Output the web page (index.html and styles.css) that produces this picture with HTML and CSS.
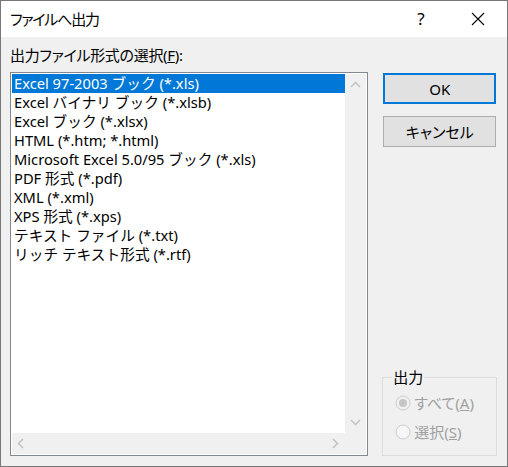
FILE: index.html
```html
<!DOCTYPE html>
<html lang="ja">
<head>
<meta charset="utf-8">
<link rel="stylesheet" href="styles.css">
</head>
<body>
<div class="window">
  <div class="titlebar">
    <span class="title">ファイルへ出力</span>
    <span class="help">?</span>
    <span class="close">
      <svg width="14" height="14" viewBox="0 0 14 14"><path d="M1 1 L13 13 M13 1 L1 13" stroke="#000" stroke-width="1.1" fill="none"/></svg>
    </span>
  </div>
  <div class="content">
    <div class="left">
      <div class="label">出力ファイル形式の選択(<u>F</u>):</div>
      <div class="listbox">
        <ul class="items">
          <li class="selected">Excel 97-2003 ブック (*.xls)</li>
          <li>Excel バイナリ ブック (*.xlsb)</li>
          <li>Excel ブック (*.xlsx)</li>
          <li>HTML (*.htm; *.html)</li>
          <li>Microsoft Excel 5.0/95 ブック (*.xls)</li>
          <li>PDF 形式 (*.pdf)</li>
          <li>XML (*.xml)</li>
          <li>XPS 形式 (*.xps)</li>
          <li>テキスト ファイル (*.txt)</li>
          <li>リッチ テキスト形式 (*.rtf)</li>
        </ul>
        <div class="vscroll">
          <svg width="11" height="7" viewBox="0 0 11 7"><path d="M1 6 L5.5 1.5 L10 6" stroke="#c4c4c4" stroke-width="1.6" fill="none"/></svg>
          <svg width="11" height="7" viewBox="0 0 11 7"><path d="M1 1 L5.5 5.5 L10 1" stroke="#c4c4c4" stroke-width="1.6" fill="none"/></svg>
        </div>
        <div class="hscroll">
          <svg width="7" height="11" viewBox="0 0 7 11"><path d="M6 1 L1.5 5.5 L6 10" stroke="#c4c4c4" stroke-width="1.6" fill="none"/></svg>
          <svg width="7" height="11" viewBox="0 0 7 11"><path d="M1 1 L5.5 5.5 L1 10" stroke="#c4c4c4" stroke-width="1.6" fill="none"/></svg>
        </div>
        <div class="corner"></div>
      </div>
    </div>
    <div class="right">
      <button class="btn default">OK</button>
      <button class="btn">キャンセル</button>
      <fieldset class="group">
        <legend>出力</legend>
        <div class="radio disabled">
          <svg width="16" height="16" viewBox="0 0 16 16"><circle cx="8" cy="8" r="7" fill="#f0f0f0" stroke="#cccccc"/><circle cx="8" cy="8" r="4" fill="#c6c6c6"/></svg>
          <span>すべて(<u>A</u>)</span>
        </div>
        <div class="radio disabled">
          <svg width="16" height="16" viewBox="0 0 16 16"><circle cx="8" cy="8" r="7" fill="#f6f6f6" stroke="#cccccc"/></svg>
          <span>選択(<u>S</u>)</span>
        </div>
      </fieldset>
    </div>
  </div>
</div>
</body>
</html>
```
FILE: styles.css
```css
* { box-sizing: border-box; }
html, body { margin: 0; padding: 0; }
body {
  font-family: "Noto Sans", "Noto Sans CJK JP", sans-serif;
  font-feature-settings: "palt";
  font-size: 15px;
  color: #000;
  background: #f0f0f0;
}
.window {
  width: 508px;
  height: 467px;
  border: 1px solid #777777;
  background: #f0f0f0;
  display: flex;
  flex-direction: column;
}
.titlebar {
  height: 36px;
  background: #fff;
  display: flex;
  align-items: center;
  padding-left: 9px;
  flex-shrink: 0;
}
.title { flex: 1; font-size: 15px; letter-spacing: -1.2px; padding-bottom: 1px; }
.help { width: 20px; text-align: center; margin-right: 40px; font-size: 17px; padding-bottom: 1px; }
.close { width: 14px; height: 14px; margin-right: 22px; display: flex; }
.content {
  flex: 1;
  display: flex;
  padding: 8px 10px 10px 9px;
}
.left { display: flex; flex-direction: column; width: 359px; }
.label { line-height: 20px; margin-bottom: 7px; letter-spacing: -0.3px; }
.listbox {
  flex: 1;
  border: 1px solid #828790;
  padding: 1px;
  background: #fff;
  display: grid;
  grid-template-columns: 1fr 21px;
  grid-template-rows: 1fr 21px;
}
.items { list-style: none; margin: 0; padding: 0; overflow: hidden; font-feature-settings: normal; font-size: 14.7px; }
.items li { height: 19px; line-height: 19px; padding-left: 2px; white-space: nowrap; }
.items li.selected { background: #0078d7; color: #fff; }
.vscroll {
  background: #f0f0f0;
  display: flex;
  flex-direction: column;
  justify-content: space-between;
  align-items: center;
  padding: 7px 0 7px;
}
.hscroll {
  background: #f0f0f0;
  display: flex;
  justify-content: space-between;
  align-items: center;
  padding: 0 6px 0 5px;
}
.corner { background: #f0f0f0; }
.right {
  display: flex;
  flex-direction: column;
  margin-left: 14px;
  width: 115px;
}
.btn {
  font: inherit;
  font-feature-settings: "palt";
  width: 113px;
  height: 31px;
  margin-left: 1px;
  background: #e1e1e1;
  border: 1px solid #adadad;
  padding: 0;
  color: #000;
}
.btn.default { border: 2px solid #0078d7; height: 31px; margin-top: 28px; margin-bottom: 12px; }
.group {
  margin: auto 0 0 0;
  border: 1px solid #dcdcdc;
  padding: 2px 0 6px 12px;
  height: 88px;
}
.group legend { padding: 0 1px; margin-left: -3px; line-height: 18px; }
.radio { display: flex; align-items: center; height: 29px; color: #a0a0a0; gap: 3px; }
.radio svg { flex-shrink: 0; }
```
